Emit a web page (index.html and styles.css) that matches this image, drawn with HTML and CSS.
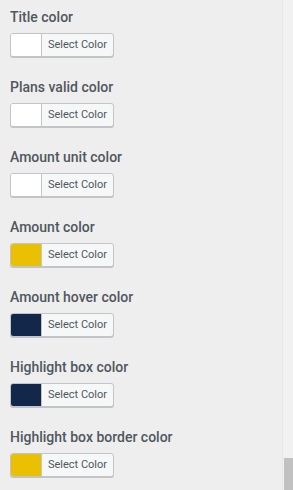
FILE: index.html
```html
<!DOCTYPE html>
<html lang="en">
<head>
    <meta charset="UTF-8">
    <title>Color settings</title>
    <meta name="viewport" content="width=device-width, initial-scale=1.0">
    <link rel="stylesheet" href="styles.css">
</head>
<body>
<div class="frame">
    <div class="panel">
        <div class="field">
            <label class="field-label">Title color</label>
            <button class="picker"><span class="swatch swatch-white"></span><span class="picker-text">Select Color</span></button>
        </div>
        <div class="field">
            <label class="field-label">Plans valid color</label>
            <button class="picker"><span class="swatch swatch-white"></span><span class="picker-text">Select Color</span></button>
        </div>
        <div class="field">
            <label class="field-label">Amount unit color</label>
            <button class="picker"><span class="swatch swatch-white"></span><span class="picker-text">Select Color</span></button>
        </div>
        <div class="field">
            <label class="field-label">Amount color</label>
            <button class="picker"><span class="swatch swatch-yellow"></span><span class="picker-text">Select Color</span></button>
        </div>
        <div class="field">
            <label class="field-label">Amount hover color</label>
            <button class="picker"><span class="swatch swatch-navy"></span><span class="picker-text">Select Color</span></button>
        </div>
        <div class="field">
            <label class="field-label">Highlight box color</label>
            <button class="picker"><span class="swatch swatch-navy"></span><span class="picker-text">Select Color</span></button>
        </div>
        <div class="field">
            <label class="field-label">Highlight box border color</label>
            <button class="picker"><span class="swatch swatch-yellow"></span><span class="picker-text">Select Color</span></button>
        </div>
    </div>
    <div class="scrollbar">
        <div class="scroll-thumb"></div>
    </div>
</div>
</body>
</html>
```

FILE: styles.css
```css
* {
    box-sizing: border-box;
}

html, body {
    height: 100%;
}

body {
    margin: 0;
    overflow: hidden;
    background-color: #eeeeee;
    font-family: Roboto, "Liberation Sans", sans-serif;
}

.frame {
    display: flex;
    height: 100%;
}

.panel {
    flex: 1;
    padding: 7px 10px 0 10px;
}

.field {
    height: 70px;
}

.field-label {
    display: block;
    font-size: 14px;
    font-weight: 500;
    line-height: 20px;
    color: #50575e;
    margin-bottom: 6px;
}

.picker {
    display: flex;
    align-items: stretch;
    width: 104px;
    height: 24px;
    padding: 0;
    border: 1px solid #c3c4c7;
    border-radius: 3px;
    background-color: #f6f7f7;
    box-shadow: 0 1px 0 #c3c4c7;
    overflow: hidden;
    cursor: pointer;
    font-family: inherit;
}

.swatch {
    width: 31px;
    border-right: 1px solid #c3c4c7;
}

.swatch-white {
    background-color: #ffffff;
}

.swatch-yellow {
    background-color: #eac102;
}

.swatch-navy {
    background-color: #13274a;
}

.picker-text {
    flex: 1;
    font-size: 11px;
    line-height: 22px;
    color: #50575e;
    text-align: center;
}

.scrollbar {
    width: 11px;
    display: flex;
    flex-direction: column;
    justify-content: flex-end;
    align-items: flex-end;
    background-color: #f1f1f1;
    border-left: 1px solid #e6e6e6;
}

.scroll-thumb {
    width: 9px;
    height: 32px;
    background-color: #c1c1c1;
}
```
